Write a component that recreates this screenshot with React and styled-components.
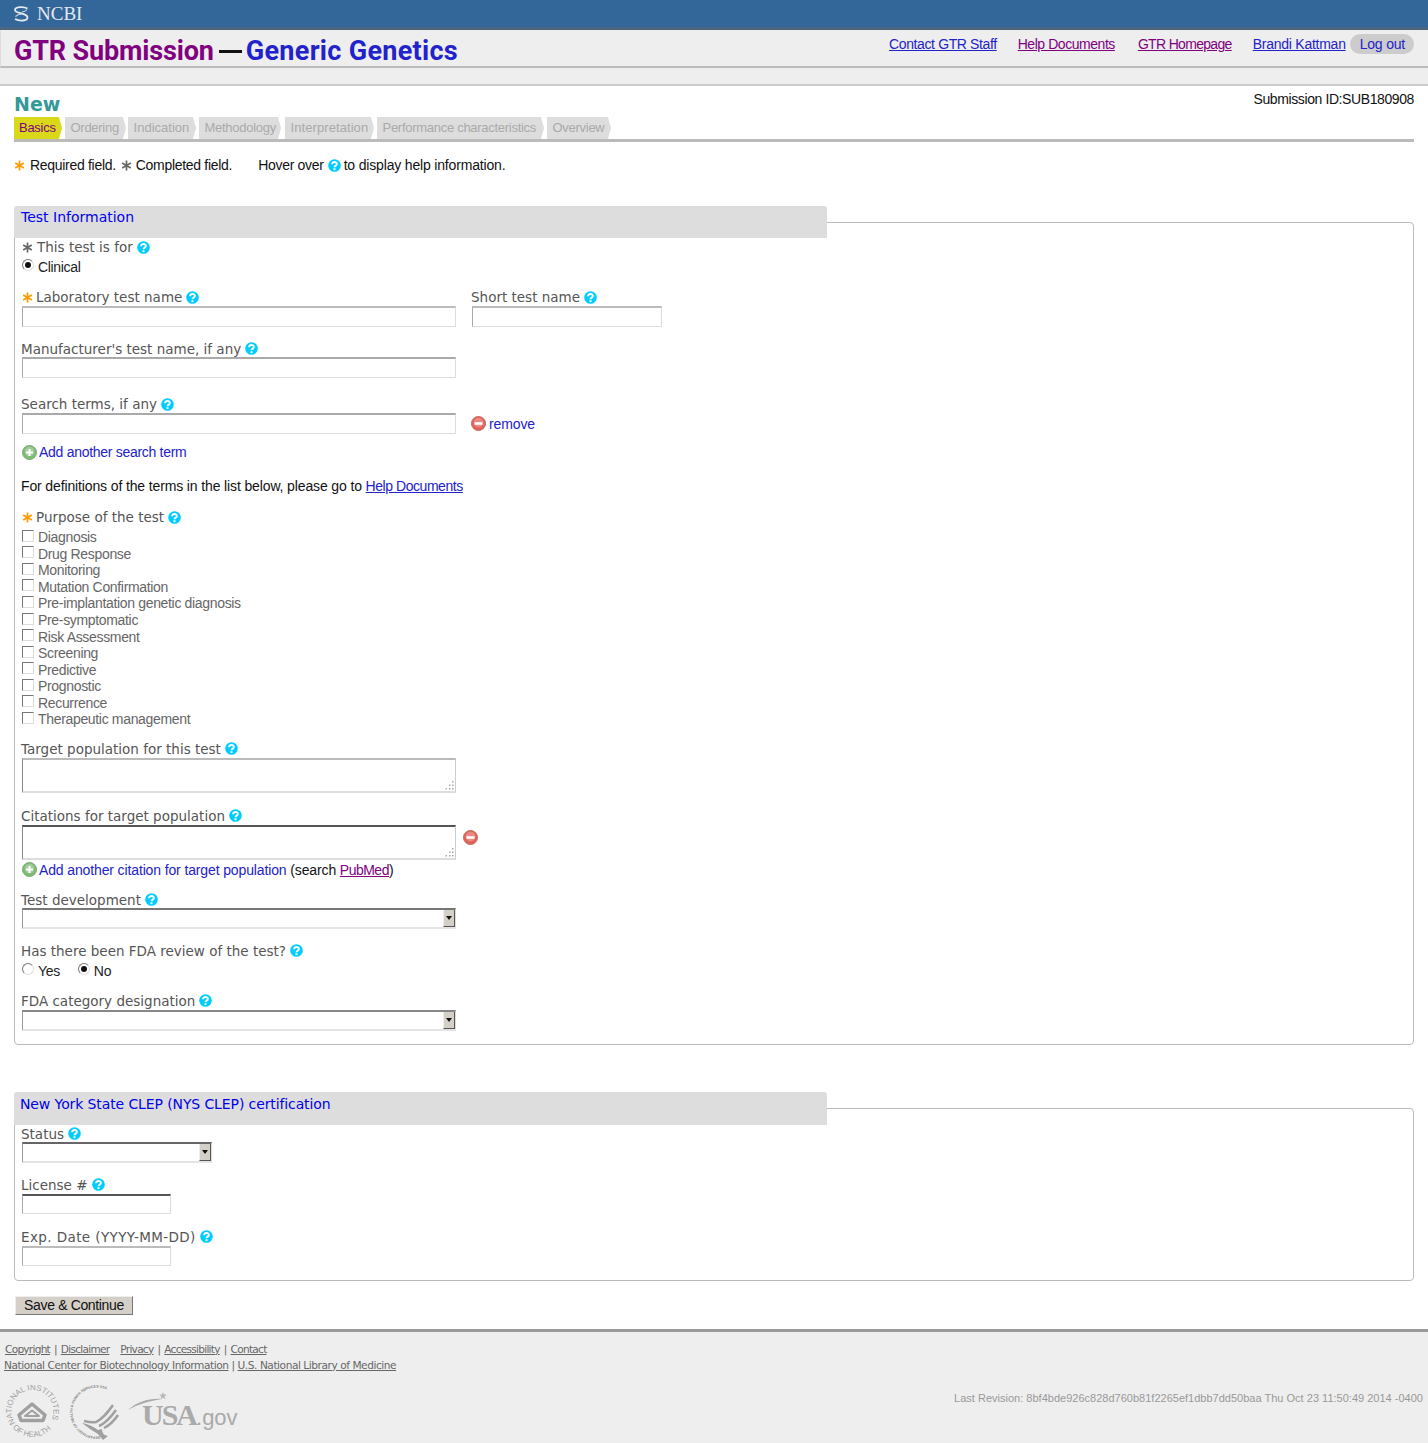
import React from "react";
import styled, { createGlobalStyle } from "styled-components";

const GlobalStyle = createGlobalStyle`
  html, body { margin: 0; padding: 0; background: #fff; }
  body { font-family: "Liberation Sans", Arial, sans-serif; font-size: 14px; color: #222; }
  * { box-sizing: border-box; }
`;

const TopBar = styled.div`
  height: 30px;
  background: #336699;
  border-bottom: 3px solid #4d6680;
  display: flex;
  align-items: center;
  padding-left: 13px;
  gap: 7px;
`;
const NcbiText = styled.span`
  font-family: "Liberation Serif", serif;
  font-size: 19px;
  color: #e4e9ef;
`;
const TitleBar = styled.div`
  height: 38px;
  background: #eeeeee;
  border-bottom: 2px solid #bbbbbb;
  border-left: 1px solid #ddd;
  display: flex;
  justify-content: space-between;
  align-items: flex-start;
  padding: 0 14px 0 13px;
`;
const PageTitle = styled.h1`
  margin: 4px 0 0;
  font-size: 27px;
  line-height: 34px;
  font-weight: bold;
  font-family: "Roboto", "Liberation Sans", sans-serif;
  display: flex;
  align-items: center;
`;
const TitlePurple = styled.span`
  color: #800080;
  letter-spacing: -0.15px;
`;
const TitleDash = styled.span`
  display: block;
  width: 23px;
  height: 3px;
  background: #111;
  margin: 0 4px 0 5px;
`;
const TitleBlue = styled.span`
  color: #2222cc;
  letter-spacing: 0.3px;
`;
const TopLinks = styled.nav`
  display: flex;
  align-items: center;
  margin-top: 4px;
`;
const TopLink = styled.a`
  font-size: 14px;
  letter-spacing: ${(p) => p.$ls ?? -0.45}px;
  color: ${(p) => (p.$visited ? "#800080" : "#2222cc")};
  text-decoration: underline;
  margin-left: ${(p) => p.$gap}px;
`;
const LogOut = styled.span`
  font-size: 14px;
  letter-spacing: -0.2px;
  color: #2222cc;
  background: #cccccc;
  border-radius: 10px;
  height: 20px;
  line-height: 20px;
  padding: 0 9px 0 10px;
  margin-left: 4px;
`;
const Strip = styled.div`
  height: 18px;
  background: #eeeeee;
  border-bottom: 2px solid #cccccc;
`;
const Content = styled.main`
  padding: 0 14px;
`;
const TitleRow = styled.div`
  height: 31px;
  display: flex;
  justify-content: space-between;
  align-items: flex-start;
`;
const NewHeading = styled.h2`
  margin: 6px 0 0;
  font-size: 19px;
  line-height: 24px;
  font-family: "DejaVu Sans", sans-serif;
  font-weight: bold;
  color: #339999;
`;
const SubmissionId = styled.div`
  margin-top: 4px;
  font-size: 14px;
  line-height: 18px;
  letter-spacing: -0.4px;
  color: #111;
`;
const Tabs = styled.div`
  height: 25px;
  display: flex;
  border-bottom: 3px solid #bbbbbb;
`;
const Tab = styled.div`
  width: ${(p) => p.$w}px;
  margin-right: ${(p) => p.$gap}px;
  height: 22px;
  line-height: 22px;
  padding-left: ${(p) => (p.$active ? 5 : 5.5)}px;
  font-size: 13px;
  letter-spacing: ${(p) => p.$ls ?? -0.28}px;
  white-space: nowrap;
  background: ${(p) => (p.$active ? "#d9d91a" : "#dddddd")};
  color: ${(p) => (p.$active ? "#800080" : "#aaaaaa")};
  clip-path: polygon(0 0, calc(100% - 3px) 0, 100% 50%, calc(100% - 3px) 100%, 0 100%);
`;
const Legend = styled.div`
  margin-top: 14px;
  height: 18px;
  display: flex;
  align-items: center;
  font-size: 14px;
  letter-spacing: -0.3px;
  color: #111;
  white-space: pre;
`;
const LegendTail = styled.span`
  letter-spacing: -0.17px;
`;
const Spacer = styled.span`
  display: inline-block;
  width: ${(p) => p.$w}px;
`;
const Section = styled.section`
  margin-top: ${(p) => p.$top}px;
`;
const SectionTab = styled.div`
  position: relative;
  width: 813px;
  height: ${(p) => p.$h}px;
  background: #dddddd;
  border-radius: 3px 3px 0 0;
  padding: ${(p) => p.$pad}px 0 0 ${(p) => p.$indent}px;
  line-height: 18px;
  font-family: "DejaVu Sans", sans-serif;
  font-size: 14px;
  letter-spacing: ${(p) => p.$ls || 0}px;
  color: #0000ee;
`;
const Panel = styled.div`
  margin-top: -${(p) => p.$lap}px;
  padding: ${(p) => p.$lap - 1}px 7px ${(p) => p.$bottom}px 7px;
  border: 1px solid #bbbbbb;
  border-radius: 4px;
`;
const Label = styled.div`
  margin-top: ${(p) => p.$top || 0}px;
  height: ${(p) => p.$h || 18}px;
  display: flex;
  align-items: center;
  font-family: "DejaVu Sans", sans-serif;
  font-size: 13.5px;
  letter-spacing: ${(p) => p.$ls || 0}px;
  color: #555555;
  white-space: nowrap;
  margin-left: -1px;
`;
const InlineFields = styled.div`
  display: flex;
  gap: 16px;
`;
const FieldColumn = styled.div`
  display: flex;
  flex-direction: column;
`;
const TextInput = styled.input`
  display: block;
  width: ${(p) => p.$w || 434}px;
  height: ${(p) => p.$h || 21}px;
  background: #fff;
  border-style: solid;
  border-width: 2px 1px 1px 1px;
  border-color: ${(p) => p.$tone || "#aaaaaa"} #dddddd #dddddd #aaaaaa;
  padding: 0 2px;
  margin: 0;
`;
const AreaWrap = styled.div`
  position: relative;
  width: 434px;
  height: 35px;
`;
const TextArea = styled.textarea`
  display: block;
  width: 100%;
  height: 100%;
  resize: none;
  margin: 0;
  border-style: solid;
  border-width: 2px 1px 2px 1px;
  border-color: ${(p) => p.$tone || "#aaaaaa"} #cccccc #dddddd #888888;
`;
const Grip = styled.svg`
  position: absolute;
  right: 2px;
  bottom: 3px;
  width: 10px;
  height: 10px;
`;
const RemoveRow = styled.div`
  display: flex;
  align-items: ${(p) => p.$align || "center"};
  gap: ${(p) => p.$gap}px;
`;
const IconNudge = styled.span`
  display: flex;
  margin-top: ${(p) => p.$top}px;
`;
const SelectBox = styled.div`
  width: ${(p) => p.$w || 434}px;
  height: 21px;
  display: flex;
  justify-content: flex-end;
  border-style: solid;
  border-width: 2px 1px 2px 1px;
  border-color: ${(p) => p.$tone || "#888888"} #dddddd #e4e4e4 #999999;
`;
const SelectArrow = styled.div`
  width: 12px;
  background: #d4d0c8;
  border-left: 1px solid #eeeeee;
  border-right: 1px solid #555555;
  border-bottom: 1px solid #555555;
  display: flex;
  align-items: center;
  justify-content: center;
  &::after {
    content: "";
    border-style: solid;
    border-width: 4px 3px 0 3px;
    border-color: #111 transparent transparent transparent;
  }
`;
const ActionLine = styled.div`
  margin-top: ${(p) => p.$top || 0}px;
  margin-left: ${(p) => p.$left || 0}px;
  height: 18px;
  display: flex;
  align-items: center;
  font-size: 14px;
  letter-spacing: -0.13px;
  color: #111;
  white-space: pre;
`;
const BlueAction = styled.a`
  color: #2222cc;
  margin-left: ${(p) => p.$left || 0}px;
  letter-spacing: ${(p) => p.$ls ?? -0.13}px;
`;
const PlainLink = styled.a`
  color: ${(p) => (p.$visited ? "#800080" : "#2222cc")};
  letter-spacing: ${(p) => p.$ls ?? -0.2}px;
  text-decoration: underline;
`;
const CheckList = styled.div`
  margin-top: 3px;
  display: flex;
  flex-direction: column;
`;
const ChoiceRow = styled.label`
  height: ${(p) => p.$h || 16.55}px;
  margin-top: ${(p) => p.$top || 0}px;
  display: flex;
  align-items: center;
  font-size: 14px;
  letter-spacing: -0.33px;
  color: ${(p) => p.$color || "#666666"};
  white-space: nowrap;
`;
const CheckBox = styled.span`
  width: 12px;
  height: 12px;
  margin: -3px 4px 0 0;
  background: #fff;
  border: 1px solid;
  border-color: #777777 #dddddd #dddddd #777777;
  flex: none;
`;
const Radio = styled.span`
  width: 12px;
  height: 12px;
  margin: -4px 4px 0 0;
  border-radius: 50%;
  border: 1px solid;
  border-color: #777777 #dddddd #dddddd #777777;
  flex: none;
  display: flex;
  align-items: center;
  justify-content: center;
  &::after {
    content: "";
    width: 6px;
    height: 6px;
    border-radius: 50%;
    background: ${(p) => (p.$on ? "#111" : "transparent")};
  }
`;
const RadioGroup = styled.div`
  display: flex;
  gap: 18px;
  margin-top: 2px;
`;
const SaveButton = styled.button`
  display: block;
  margin: 15px 0 0 1px;
  width: 118px;
  height: 19px;
  padding: 0;
  background: #d4d0c8;
  border: 1px solid;
  border-color: #eeeeee #777777 #777777 #eeeeee;
  font-family: "Liberation Sans", sans-serif;
  font-size: 14px;
  letter-spacing: -0.35px;
  color: #111;
`;
const Footer = styled.footer`
  margin-top: 14px;
  height: 114px;
  background: #eeeeee;
  border-top: 3px solid #999999;
  padding: 9px 5px 0 4px;
  display: flex;
  justify-content: space-between;
  font-family: "DejaVu Sans", sans-serif;
  color: #666666;
  overflow: hidden;
`;
const FooterLeft = styled.div`
  display: flex;
  flex-direction: column;
`;
const FooterLine = styled.div`
  height: 16px;
  line-height: 16px;
  font-size: 10.6px;
  letter-spacing: ${(p) => p.$ls}px;
  padding-left: ${(p) => p.$indent || 0}px;
  white-space: nowrap;
`;
const FooterLink = styled.a`
  color: #666666;
  text-decoration: underline;
  margin-left: ${(p) => p.$left || 0}px;
`;
const Pipe = styled.span`
  margin: 0 ${(p) => p.$side ?? 4}px;
`;
const Logos = styled.div`
  margin-top: 12px;
  display: flex;
  align-items: flex-start;
`;
const Revision = styled.div`
  margin-top: 51px;
  font-family: "Liberation Sans", sans-serif;
  font-size: 11px;
  letter-spacing: 0.01px;
  color: #999999;
  white-space: nowrap;
`;
const UsaText = styled.span`
  font-family: "Liberation Serif", serif;
  font-size: 30px;
  line-height: 56px;
  font-weight: bold;
  color: #aaaaaa;
  margin: 2px 0 0 -26px;
  letter-spacing: -2px;
`;
const GovText = styled.span`
  font-family: "Liberation Sans", sans-serif;
  font-size: 22px;
  font-weight: normal;
  letter-spacing: 0;
`;

const HelpSvg = styled.svg`
  width: 13px;
  height: 13px;
  margin-left: ${(p) => p.$left ?? 4}px;
  flex: none;
`;
const Help = ({ left }) => (
  <HelpSvg viewBox="0 0 13 13" $left={left}>
    <circle cx="6.5" cy="6.5" r="6.3" fill="#00ccff" />
    <path d="M4.100 5.300c0-3.100 4.800-3.100 4.800-.3 0 1.600-2.400 1.600-2.400 3.200" fill="none" stroke="#fff" strokeWidth="1.9" />
    <rect x="5.500" y="9.300" width="2" height="1.800" fill="#fff" />
  </HelpSvg>
);

const StarSvg = styled.svg`
  width: 11px;
  height: 11px;
  margin: 0 ${(p) => p.$right ?? 3}px 0 ${(p) => p.$left ?? 1}px;
  flex: none;
`;
const Star = ({ color, right, left }) => (
  <StarSvg viewBox="0 0 11 11" $right={right} $left={left}>
    <path d="M5.500 .5v10M1.200 3l8.600 5M9.800 3l-8.600 5" stroke={color} strokeWidth="1.7" />
  </StarSvg>
);

const RoundSvg = styled.svg`
  flex: none;
`;
const Round = ({ kind }) => {
  const plus = kind === "add";
  return (
    <RoundSvg width="15" height="15" viewBox="0 0 15 15">
      <circle cx="7.500" cy="7.500" r="7" fill={plus ? "#7fbb76" : "#e0625a"} stroke={plus ? "#7aa873" : "#c8685f"} />
      <circle cx="7.500" cy="6.500" r="4.800" fill="#fff" opacity="0.25" />
      {plus ? (
        <path d="M7.500 4v7M4 7.500h7" stroke="#fff" strokeWidth="2.200" />
      ) : (
        <path d="M3.500 7.500h8" stroke="#fff" strokeWidth="2.600" />
      )}
    </RoundSvg>
  );
};

const DotGrip = () => (
  <Grip viewBox="0 0 10 10">
    <path d="M8 1h1.500v1.500H8zM5 4.500h1.500V6H5zM8 4.500h1.500V6H8zM1.500 8H3v1.500H1.500zM5 8h1.500v1.500H5zM8 8h1.500v1.500H8z" fill="#aaa" />
  </Grip>
);

const NcbiHelix = () => (
  <svg width="17" height="20" viewBox="0 0 17 20">
    <path d="M14.500 4.500C10 2 2 3 2 6c0 4 12.500 2.500 12.500 7.500 0 3.500-8 4-12.500 1.500" fill="none" stroke="#e4e9ef" strokeWidth="1.800" />
    <path d="M2.500 12.500c2-1.800 4-2.300 6-2.500M9 8c2-.3 4-1 5-2.500" fill="none" stroke="#c8d4e0" strokeWidth="1.200" />
  </svg>
);

const NihLogo = () => (
  <svg width="60" height="56" viewBox="0 0 60 56">
    <defs>
      <path id="nih-top" d="M11.300 38A21 21 0 1 1 45.700 38" />
      <path id="nih-bot" d="M8.600 42.700A26 26 0 0 0 48.400 42.700" />
    </defs>
    <text fontFamily="Liberation Sans, sans-serif" fontSize="7.900" fill="#a0a0a0">
      <textPath href="#nih-top">NATIONAL INSTITUTES</textPath>
    </text>
    <text fontFamily="Liberation Sans, sans-serif" fontSize="7.800" fill="#a0a0a0">
      <textPath href="#nih-bot">OF HEALTH</textPath>
    </text>
    <path d="M28 19L41 30 39 35.500H17L15 30z" fill="none" stroke="#a0a0a0" strokeWidth="3.500" strokeLinejoin="round" />
    <path d="M28 25.500L35 31H21z" fill="none" stroke="#a0a0a0" strokeWidth="2" strokeLinejoin="round" />
  </svg>
);

const HhsLogo = () => (
  <svg width="62" height="56" viewBox="0 0 62 56">
    <defs>
      <path id="hhs-arc" d="M36 51.300A24.500 24.500 0 1 1 53.100 13" />
    </defs>
    <text fontFamily="Liberation Sans, sans-serif" fontSize="3.500" fontWeight="bold" fill="#808080">
      <textPath href="#hhs-arc">DEPARTMENT OF HEALTH &amp; HUMAN SERVICES USA</textPath>
    </text>
    <path d="M49 20C44 27 39 34 32 37 28 38 24 37 20 36" fill="none" stroke="#a0a0a0" strokeWidth="2.500" />
    <path d="M52 25C47 32 42 38 35 41" fill="none" stroke="#a0a0a0" strokeWidth="2.500" />
    <path d="M54 30C50 36 46 40 40 43" fill="none" stroke="#a0a0a0" strokeWidth="2.500" />
    <path d="M18 38C24 39 30 42 34 45L38 44C38 47 39 50 44 51L39 55 34 49 26 44z" fill="#a0a0a0" />
  </svg>
);

const SwooshSvg = styled.svg`
  margin-top: 5px;
`;
const UsaSwoosh = () => (
  <SwooshSvg width="42" height="22" viewBox="0 0 42 22">
    <path d="M2 20C12 11 24 8 36 9 24 11 12 14 2 20z" fill="#aaaaaa" />
    <path d="M37 2l1 2.600 2.800.2-2.200 1.800.8 2.700-2.400-1.500-2.400 1.500.8-2.700-2.200-1.800 2.800-.2z" fill="#b8b8b8" />
  </SwooshSvg>
);

const tabs = [
  ["Basics", 48, 3],
  ["Ordering", 61, 2],
  ["Indication", 68, 3, 0.02],
  ["Methodology", 82, 4],
  ["Interpretation", 89, 3, 0.08],
  ["Performance characteristics", 167, 3],
  ["Overview", 64, 0],
];

const purposes = [
  "Diagnosis",
  "Drug Response",
  "Monitoring",
  "Mutation Confirmation",
  "Pre-implantation genetic diagnosis",
  "Pre-symptomatic",
  "Risk Assessment",
  "Screening",
  "Predictive",
  "Prognostic",
  "Recurrence",
  "Therapeutic management",
];

export default function App() {
  return (
    <>
      <GlobalStyle />
      <TopBar>
        <NcbiHelix />
        <NcbiText>NCBI</NcbiText>
      </TopBar>
      <TitleBar>
        <PageTitle>
          <TitlePurple>GTR Submission</TitlePurple>
          <TitleDash />
          <TitleBlue>Generic Genetics</TitleBlue>
        </PageTitle>
        <TopLinks>
          <TopLink $ls={-0.38}>Contact GTR Staff</TopLink>
          <TopLink $visited $gap={21}>Help Documents</TopLink>
          <TopLink $visited $gap={23} $ls={-0.68}>GTR Homepage</TopLink>
          <TopLink $gap={21} $ls={-0.25}>Brandi Kattman</TopLink>
          <LogOut>Log out</LogOut>
        </TopLinks>
      </TitleBar>
      <Strip />
      <Content>
        <TitleRow>
          <NewHeading>New</NewHeading>
          <SubmissionId>Submission ID:SUB180908</SubmissionId>
        </TitleRow>
        <Tabs>
          {tabs.map(([name, w, gap, ls], i) => (
            <Tab key={name} $w={w} $gap={gap} $ls={ls} $active={i === 0}>{name}</Tab>
          ))}
        </Tabs>
        <Legend>
          <Star color="#ff9900" left={0} right={5} />
          Required field.
          <Star color="#666666" left={5} right={4} />
          Completed field.
          <Spacer $w={26} />
          Hover over
          <Help left={4} />
          <Spacer $w={3} />
          <LegendTail>to display help information.</LegendTail>
        </Legend>

        <Section $top={32}>
          <SectionTab $h={32} $pad={2} $indent={7}>Test Information</SectionTab>
          <Panel $lap={16} $bottom={13}>
            <Label>
              <Star color="#666666" right={4} />
              This test is for
              <Help />
            </Label>
            <ChoiceRow $h={18} $top={2} $color="#222">
              <Radio $on />
              Clinical
            </ChoiceRow>

            <InlineFields>
              <FieldColumn>
                <Label $top={12}>
                  <Star color="#ff9900" left={1} right={3} />
                  Laboratory test name
                  <Help />
                </Label>
                <TextInput $tone="#bbbbbb" />
              </FieldColumn>
              <FieldColumn>
                <Label $top={12}>
                  Short test name
                  <Help />
                </Label>
                <TextInput $w={190} $tone="#bbbbbb" />
              </FieldColumn>
            </InlineFields>

            <Label $top={13} $h={17}>
              Manufacturer's test name, if any
              <Help />
            </Label>
            <TextInput />

            <Label $top={17}>
              Search terms, if any
              <Help />
            </Label>
            <RemoveRow $gap={15}>
              <TextInput />
              <ActionLine>
                <Round kind="remove" />
                <BlueAction $left={3}>remove</BlueAction>
              </ActionLine>
            </RemoveRow>
            <ActionLine $top={9}>
              <Round kind="add" />
              <BlueAction $left={2} $ls={-0.29}>Add another search term</BlueAction>
            </ActionLine>
            <ActionLine $top={16} $left={-1}>
              For definitions of the terms in the list below, please go to <PlainLink $ls={-0.45}>Help Documents</PlainLink>
            </ActionLine>

            <Label $top={13}>
              <Star color="#ff9900" left={1} right={3} />
              Purpose of the test
              <Help />
            </Label>
            <CheckList>
              {purposes.map((name) => (
                <ChoiceRow key={name}>
                  <CheckBox />
                  {name}
                </ChoiceRow>
              ))}
            </CheckList>

            <Label $top={12}>
              Target population for this test
              <Help />
            </Label>
            <AreaWrap>
              <TextArea $tone="#bbbbbb" />
              <DotGrip />
            </AreaWrap>

            <Label $top={14}>
              Citations for target population
              <Help />
            </Label>
            <RemoveRow $gap={7} $align="flex-start">
              <AreaWrap>
                <TextArea $tone="#555555" />
                <DotGrip />
              </AreaWrap>
              <IconNudge $top={5}>
                <Round kind="remove" />
              </IconNudge>
            </RemoveRow>
            <ActionLine $top={1}>
              <Round kind="add" />
              <BlueAction $left={2}>Add another citation for target population</BlueAction>
              {" (search "}
              <PlainLink $visited $ls={-0.5}>PubMed</PlainLink>)
            </ActionLine>

            <Label $top={13} $h={16}>
              Test development
              <Help />
            </Label>
            <SelectBox $tone="#777777">
              <SelectArrow />
            </SelectBox>

            <Label $top={13}>
              Has there been FDA review of the test?
              <Help />
            </Label>
            <RadioGroup>
              <ChoiceRow $h={18} $color="#222">
                <Radio />
                Yes
              </ChoiceRow>
              <ChoiceRow $h={18} $color="#222">
                <Radio $on />
                No
              </ChoiceRow>
            </RadioGroup>

            <Label $top={12}>
              FDA category designation
              <Help />
            </Label>
            <SelectBox>
              <SelectArrow />
            </SelectBox>
          </Panel>
        </Section>

        <Section $top={47}>
          <SectionTab $h={33} $pad={3} $indent={6} $ls={-0.11}>New York State CLEP (NYS CLEP) certification</SectionTab>
          <Panel $lap={17} $bottom={14}>
            <Label $top={1} $h={16}>
              Status
              <Help />
            </Label>
            <SelectBox $w={190} $tone="#666666">
              <SelectArrow />
            </SelectBox>
            <Label $top={13}>
              License #
              <Help />
            </Label>
            <TextInput $w={149} $h={20} $tone="#555555" />
            <Label $top={14} $ls={0.4}>
              Exp. Date (YYYY-MM-DD)
              <Help />
            </Label>
            <TextInput $w={149} $h={20} $tone="#bbbbbb" />
          </Panel>
        </Section>

        <SaveButton>Save &amp; Continue</SaveButton>
      </Content>
      <Footer>
        <FooterLeft>
          <FooterLine $ls={-0.75} $indent={1}>
            <FooterLink>Copyright</FooterLink>
            <Pipe>|</Pipe>
            <FooterLink>Disclaimer</FooterLink>
            <FooterLink $left={11}>Privacy</FooterLink>
            <Pipe>|</Pipe>
            <FooterLink>Accessibility</FooterLink>
            <Pipe>|</Pipe>
            <FooterLink>Contact</FooterLink>
          </FooterLine>
          <FooterLine $ls={-0.45}>
            <FooterLink>National Center for Biotechnology Information</FooterLink>
            <Pipe $side={3}>|</Pipe>
            <FooterLink>U.S. National Library of Medicine</FooterLink>
          </FooterLine>
          <Logos>
            <NihLogo />
            <HhsLogo />
            <UsaSwoosh />
            <UsaText>
              USA<GovText>.gov</GovText>
            </UsaText>
          </Logos>
        </FooterLeft>
        <Revision>Last Revision: 8bf4bde926c828d760b81f2265ef1dbb7dd50baa Thu Oct 23 11:50:49 2014 -0400</Revision>
      </Footer>
    </>
  );
}
